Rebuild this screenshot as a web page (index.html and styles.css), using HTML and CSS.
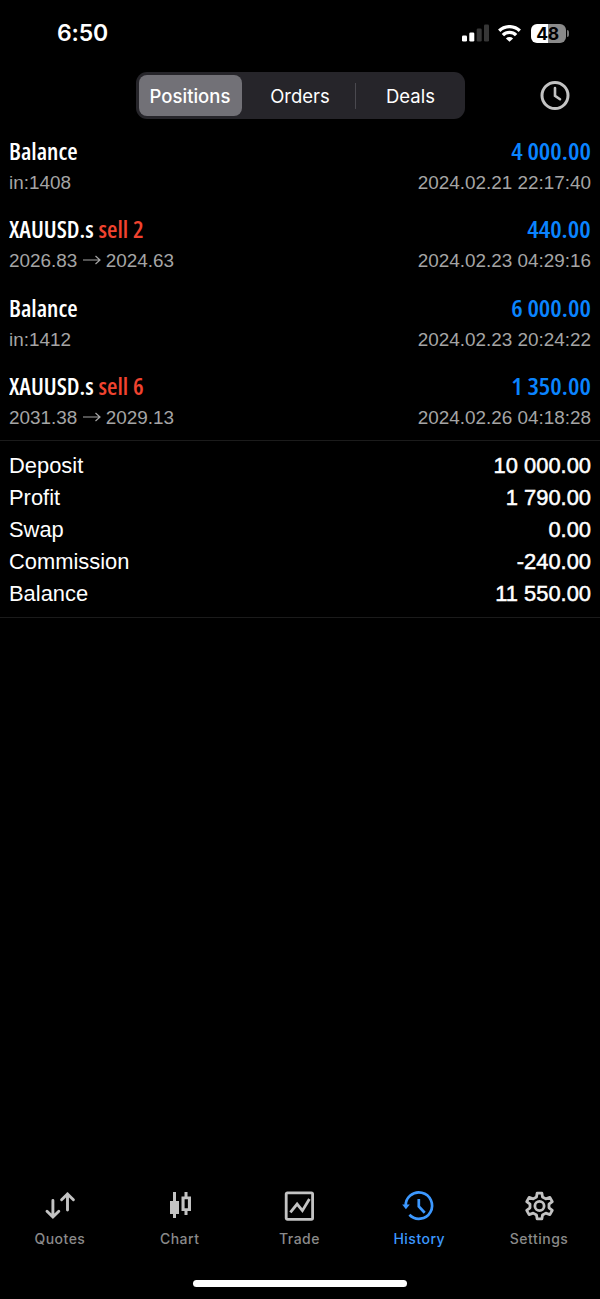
FILE: index.html
```
<!DOCTYPE html>
<html lang="en">
<head>
    <meta charset="UTF-8">
    <meta name="viewport" content="width=device-width, initial-scale=1.0">
    <title>History</title>
    <link rel="stylesheet" href="styles.css">
</head>
<body>
    <div class="status-bar">
        <span class="time">6:50</span>
        <div class="status-icons">
            <svg class="signal" width="28" height="18" viewBox="0 0 28 18">
                <rect x="0" y="11.5" width="5" height="6" rx="1.3" fill="#fff"/>
                <rect x="7.3" y="8.5" width="5" height="9" rx="1.3" fill="#fff"/>
                <rect x="14.7" y="4.5" width="5" height="13" rx="1.3" fill="#363636"/>
                <rect x="22" y="0.5" width="5" height="17" rx="1.3" fill="#363636"/>
            </svg>
            <svg class="wifi" width="23" height="17" viewBox="0 0 23 17">
                <g fill="none" stroke="#fff" stroke-width="3.3">
                    <path d="M1.2 5.8 A14.8 14.8 0 0 1 21.8 5.8"/>
                    <path d="M4.9 10.1 A9.3 9.3 0 0 1 18.1 10.1"/>
                </g>
                <path d="M11.5 16.8 L7.9 13.4 A5.2 5.2 0 0 1 15.1 13.4 Z" fill="#fff"/>
            </svg>
            <div class="battery"><span>48</span></div>
        </div>
    </div>

    <header>
        <div class="segments">
            <button class="segment active">Positions</button>
            <button class="segment">Orders</button>
            <button class="segment divided">Deals</button>
        </div>
        <svg class="clock" width="30" height="30" viewBox="0 0 30 30" fill="none" stroke="#c3c3c3" stroke-width="3">
            <circle cx="15" cy="14.5" r="13"/>
            <path d="M15 7 V14.7 L20 18.2" stroke-width="2.6" stroke-linecap="round"/>
        </svg>
    </header>

    <main>
        <div class="deals">
            <div class="deal">
                <div class="deal-row"><span class="symbol">Balance</span><span class="amount">4 000.00</span></div>
                <div class="deal-info"><span>in:1408</span><span>2024.02.21 22:17:40</span></div>
            </div>
            <div class="deal">
                <div class="deal-row"><span class="symbol">XAUUSD.s <em>sell 2</em></span><span class="amount">440.00</span></div>
                <div class="deal-info">
                    <span>2026.83 <svg class="arrow" width="18" height="10" viewBox="0 0 18 10"><path d="M0 5 H17 M12.5 1 L17 5 L12.5 9"/></svg> 2024.63</span>
                    <span>2024.02.23 04:29:16</span>
                </div>
            </div>
            <div class="deal">
                <div class="deal-row"><span class="symbol">Balance</span><span class="amount">6 000.00</span></div>
                <div class="deal-info"><span>in:1412</span><span>2024.02.23 20:24:22</span></div>
            </div>
            <div class="deal">
                <div class="deal-row"><span class="symbol">XAUUSD.s <em>sell 6</em></span><span class="amount">1 350.00</span></div>
                <div class="deal-info">
                    <span>2031.38 <svg class="arrow" width="18" height="10" viewBox="0 0 18 10"><path d="M0 5 H17 M12.5 1 L17 5 L12.5 9"/></svg> 2029.13</span>
                    <span>2024.02.26 04:18:28</span>
                </div>
            </div>
        </div>

        <div class="summary">
            <div class="summary-row"><span>Deposit</span><b>10 000.00</b></div>
            <div class="summary-row"><span>Profit</span><b>1 790.00</b></div>
            <div class="summary-row"><span>Swap</span><b>0.00</b></div>
            <div class="summary-row"><span>Commission</span><b>-240.00</b></div>
            <div class="summary-row"><span>Balance</span><b>11 550.00</b></div>
        </div>
    </main>

    <nav class="tab-bar">
        <a class="tab">
            <svg width="32" height="32" viewBox="0 0 32 32" fill="none" stroke="currentColor" stroke-width="2.9" stroke-linecap="round">
                <path d="M8.9 9.5 V26 M3 20.2 L8.9 26 L14.8 20.2"/>
                <path d="M23.5 19 V3 M17.6 8.8 L23.5 3 L29.4 8.8"/>
            </svg>
            <span>Quotes</span>
        </a>
        <a class="tab">
            <svg width="32" height="32" viewBox="0 0 32 32" fill="currentColor">
                <path d="M9 1 H12 V10 H15 V23 H12 V27 H9 V23 H6 V10 H9 Z"/>
                <path fill-rule="evenodd" d="M20.5 1 H23.5 V5.5 H27 V20 H23.5 V24 H20.5 V20 H17.5 V5.5 H20.5 Z M20.6 8.3 V17.2 H23.9 V8.3 Z"/>
            </svg>
            <span>Chart</span>
        </a>
        <a class="tab">
            <svg width="32" height="32" viewBox="0 0 32 32" fill="none" stroke="currentColor" stroke-width="2.8">
                <rect x="3.2" y="1.9" width="26.4" height="26.4" rx="1.2"/>
                <path d="M7.4 21.3 L14.1 13 L19.4 19.6 L26.4 8"/>
            </svg>
            <span>Trade</span>
        </a>
        <a class="tab active">
            <svg width="32" height="32" viewBox="0 0 32 32" fill="none" stroke="currentColor" stroke-width="2.7">
                <path d="M2.7 15.5 A13.2 13.2 0 1 1 6.4 23.8"/>
                <path d="M-0.8 13.5 H6.8 L2.9 18.2 Z" fill="currentColor" stroke="none"/>
                <path d="M15.8 8 V15.5 L21.7 21.7"/>
            </svg>
            <span>History</span>
        </a>
        <a class="tab">
            <svg width="32" height="32" viewBox="0 0 32 32" fill="none" stroke="currentColor" stroke-width="2.8" stroke-linejoin="round">
                <path d="M14.1 2.2 H18.9 L19.5 6 L22.8 7.9 L26.9 6.4 L29.3 10.6 L26 13.2 V16.8 L29.3 19.4 L26.9 23.6 L22.8 22.1 L19.5 24 L18.9 27.8 H14.1 L13.5 24 L10.2 22.1 L6.1 23.6 L3.7 19.4 L7 16.8 V13.2 L3.7 10.6 L6.1 6.4 L10.2 7.9 L13.5 6 Z"/>
                <circle cx="16.5" cy="15" r="4.6"/>
            </svg>
            <span>Settings</span>
        </a>
    </nav>
    <div class="home-indicator"></div>
</body>
</html>
```
FILE: styles.css
```
* {
    box-sizing: border-box;
}

body {
    display: flex;
    flex-direction: column;
    height: 1299px;
    margin: 0;
    background-color: #000;
    color: #fff;
    font-family: "Liberation Sans", Arial, sans-serif;
}

.status-bar {
    display: flex;
    justify-content: space-between;
    align-items: center;
    height: 66px;
    padding: 0 31px 0 57px;
}

.time {
    font-family: Inter, sans-serif;
    font-size: 23px;
    font-weight: 600;
    letter-spacing: -0.2px;
}

.status-icons {
    display: flex;
    align-items: center;
}

.wifi {
    margin-left: 8px;
}

.battery {
    position: relative;
    width: 35px;
    height: 19px;
    margin-left: 10px;
    margin-right: 3px;
    padding-right: 2px;
    border-radius: 6px;
    background: linear-gradient(90deg, #fff 49%, #8a8a8a 49%);
    color: #000;
    font-family: Inter, sans-serif;
    font-size: 17.5px;
    font-weight: 700;
    letter-spacing: -0.4px;
    line-height: 19px;
    text-align: center;
}

.battery::after {
    content: "";
    position: absolute;
    right: -3px;
    top: 6px;
    width: 2px;
    height: 7px;
    border-radius: 0 3px 3px 0;
    background-color: #777;
}

header {
    display: flex;
    justify-content: space-between;
    align-items: center;
    height: 62px;
    padding: 0 30px 3px 136px;
}

.segments {
    display: grid;
    grid-template-columns: 103px 113px 108px;
    width: 329px;
    height: 47px;
    padding: 3px 2.5px;
    border-radius: 11px;
    background-color: #26252a;
}

.segment {
    padding: 1px 0 0;
    border: 0;
    border-radius: 8px;
    background: none;
    color: #fff;
    font-family: Inter, sans-serif;
    font-size: 18.5px;
}

.segment.active {
    background-color: #727177;
    font-weight: 500;
}

.segment:not(.active) {
    padding-left: 4px;
}

.segment.divided {
    background: linear-gradient(#4a494f, #4a494f) 0 50% / 1px 26px no-repeat;
}

.deals {
    height: 313px;
    border-bottom: 1px solid #1b1b1b;
}

.deal {
    height: 78.25px;
    padding: 8px 9px 0;
}

.deal-row,
.deal-info,
.summary-row {
    display: flex;
    justify-content: space-between;
}

.deal-row {
    height: 32px;
    font-family: "Open Sans", sans-serif;
    font-size: 22.5px;
    font-stretch: 75%;
    font-weight: 600;
    line-height: 32px;
}

.symbol {
    transform: scaleX(1.06);
    transform-origin: left;
    word-spacing: 0.5px;
}

.deal-row em {
    color: #f0432f;
    font-style: normal;
}

.amount {
    color: #0a84ff;
    transform: scaleX(1.14);
    transform-origin: right;
}

.deal-info {
    color: #a5a5a5;
    font-size: 18.9px;
    line-height: 30px;
}

.arrow {
    fill: none;
    stroke: currentColor;
    stroke-width: 1.2;
    vertical-align: 2px;
}

.summary {
    height: 177px;
    padding: 9px 9px 0;
    border-bottom: 1px solid #1b1b1b;
    font-size: 21.9px;
    line-height: 32px;
}

.summary-row b {
    font-weight: 400;
    -webkit-text-stroke: 0.5px #fff;
}

.tab-bar {
    display: grid;
    grid-template-columns: repeat(5, 1fr);
    margin-top: auto;
    margin-right: 1px;
    height: 89px;
}

.tab {
    display: flex;
    flex-direction: column;
    align-items: center;
    color: #c3c3c3;
    font-family: Inter, sans-serif;
    font-size: 14px;
    font-weight: 500;
    letter-spacing: 0.5px;
}

.tab svg {
    overflow: visible;
}

.tab span {
    margin-top: 7px;
    color: #8a8a8a;
    line-height: 17px;
}

.tab.active,
.tab.active span {
    color: #3c98ff;
}

.home-indicator {
    flex: none;
    width: 214px;
    height: 7px;
    margin: 0 auto 12px;
    border-radius: 4px;
    background-color: #fff;
}
```
